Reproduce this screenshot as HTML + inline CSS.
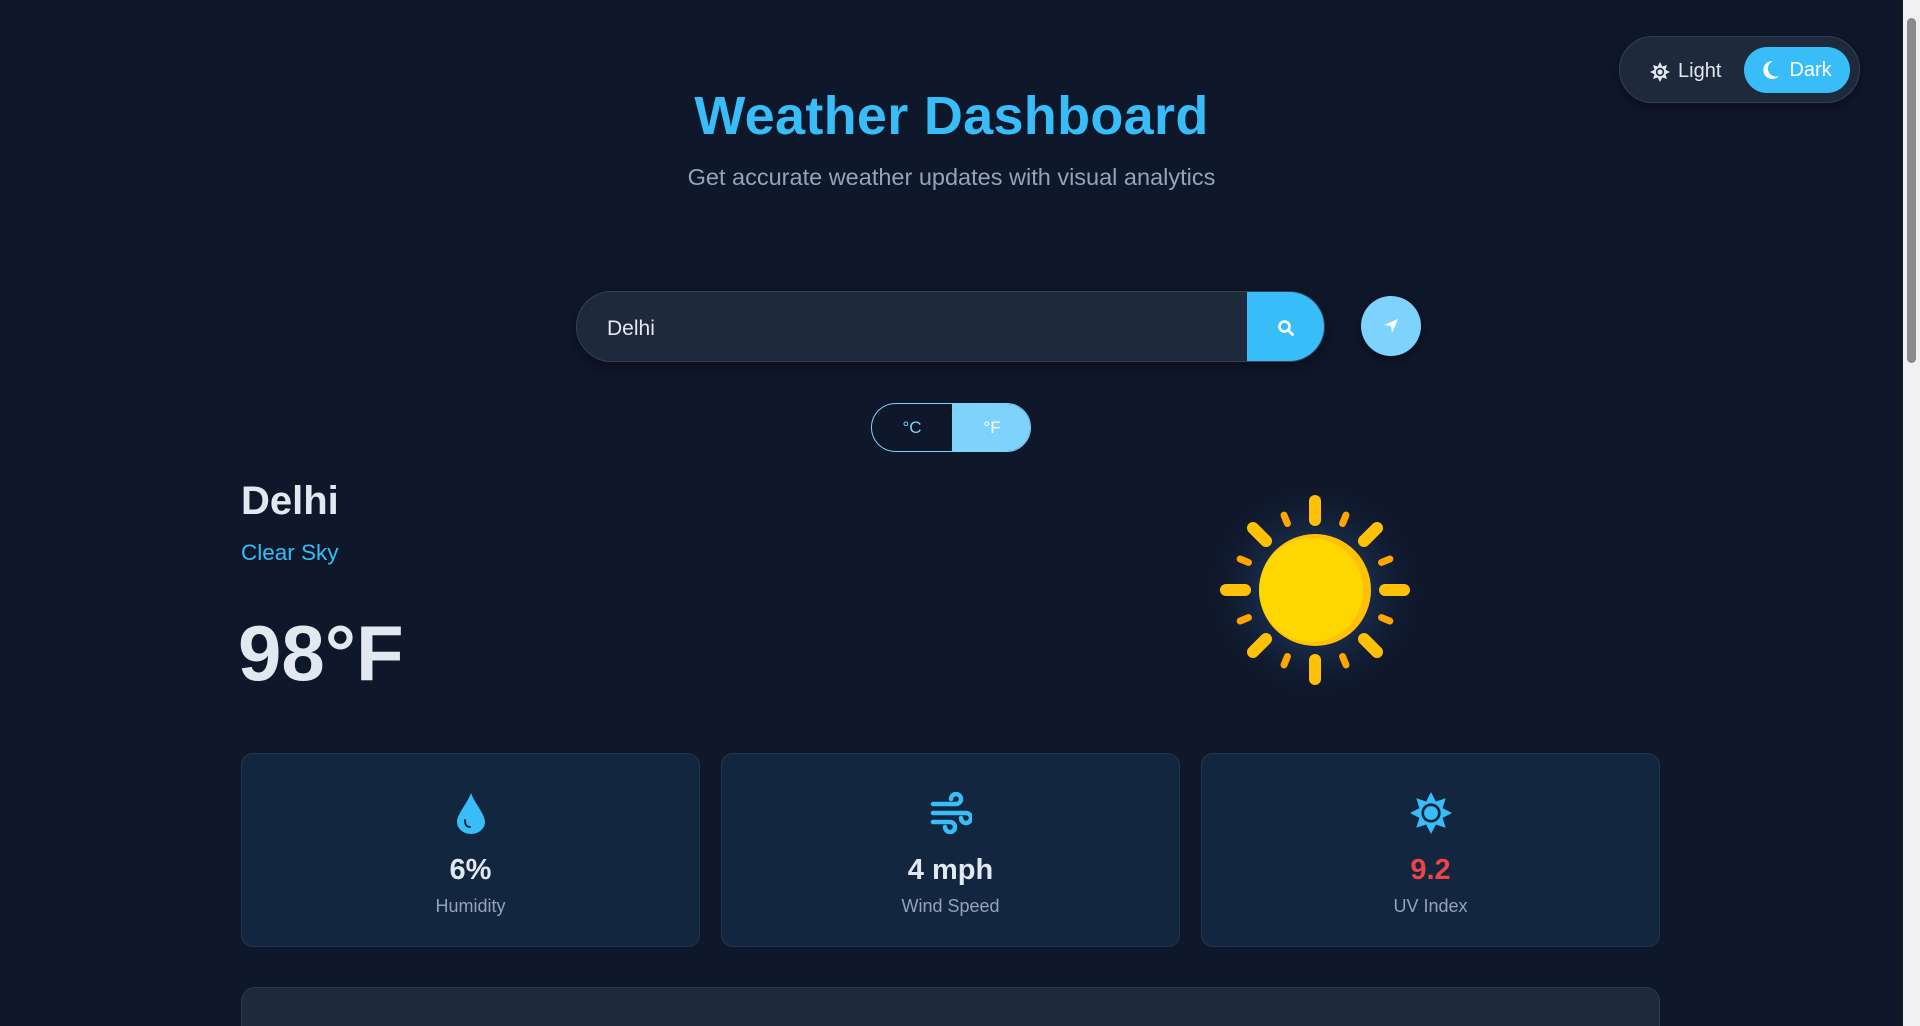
<!DOCTYPE html>
<html style="height:1026px;overflow:hidden"><head><meta charset="utf-8"><style>
*{margin:0;padding:0;box-sizing:border-box}
body{width:1920px;height:1026px;background:#0f172a;font-family:"Liberation Sans",sans-serif;overflow:hidden;position:relative;color:#e2e8f0}
.a{position:absolute}
.sb{position:absolute;right:0;top:0;width:17px;height:1026px;background:#f1f1f1}
.sb .th{position:absolute;left:4px;top:18px;width:9px;height:345px;background:#8a8a8a;border-radius:5px}
h1{position:absolute;left:0;width:1903px;top:85px;text-align:center;font-size:54px;font-weight:bold;color:#38bdf8;letter-spacing:0.3px}
.sub{position:absolute;left:0;width:1903px;top:164px;text-align:center;font-size:23.5px;color:#94a3b8}
.theme{left:1619px;top:36px;width:241px;height:67px;border-radius:34px;background:#1e293b;border:1px solid #334155;box-shadow:0 4px 12px rgba(0,0,0,.4)}
.theme .l{position:absolute;left:30px;top:23px;font-size:20px;color:#e2e8f0;display:flex;align-items:center;gap:8px}
.theme .d{position:absolute;left:124px;top:10px;width:106px;height:46px;border-radius:23px;background:#38bdf8;color:#fff;font-size:20px;display:flex;align-items:center;justify-content:center;gap:9px}
.search{left:576px;top:291px;width:749px;height:71px;border-radius:36px;background:#1e293b;border:1px solid #334155;overflow:hidden;box-shadow:0 6px 16px rgba(0,0,0,.35)}
.search .t{position:absolute;left:30px;top:25px;font-size:21px;color:#e2e8f0}
.search .b{position:absolute;right:0;top:0;width:77px;height:71px;background:#38bdf8;display:flex;align-items:center;justify-content:center}
.loc{left:1361px;top:296px;width:60px;height:60px;border-radius:50%;background:#7dd3fc;display:flex;align-items:center;justify-content:center;box-shadow:0 4px 12px rgba(0,0,0,.4)}
.unit{left:871px;top:403px;width:160px;height:49px;border-radius:25px;border:1px solid #7dd3fc;overflow:hidden}
.unit .c{position:absolute;left:0;top:0;width:80px;height:49px;color:#7dd3fc;font-size:17px;text-align:center;line-height:47px}
.unit .f{position:absolute;left:80px;top:0;width:80px;height:49px;background:#7dd3fc;color:#fff;font-size:17px;text-align:center;line-height:47px}
.card{position:absolute;top:753px;width:459px;height:194px;background:#13263f;border:1px solid #263449;border-radius:12px;text-align:center}
.card .ic{position:absolute;left:0;width:100%;top:38px;height:42px;display:flex;justify-content:center}
.card .v{position:absolute;left:0;width:100%;top:100px;font-size:29px;font-weight:bold;color:#e2e8f0}
.card .n{position:absolute;left:0;width:100%;top:142px;font-size:18px;color:#94a3b8}
.panel{position:absolute;left:241px;top:987px;width:1419px;height:39px;background:#1e293b;border:1px solid #2b3a50;border-bottom:none;border-radius:14px 14px 0 0}
</style></head><body>
<h1>Weather Dashboard</h1>
<div class="sub">Get accurate weather updates with visual analytics</div>

<div class="a theme">
 <div class="l"><svg width="20" height="20" viewBox="0 0 20 20"><polygon fill="#e2e8f0" points="10,0 12.3,4.5 17,3 15.5,7.7 20,10 15.5,12.3 17,17 12.3,15.5 10,20 7.7,15.5 3,17 4.5,12.3 0,10 4.5,7.7 3,3 7.7,4.5"/><circle cx="10" cy="10" r="4.2" fill="#1e293b"/><circle cx="10" cy="10" r="2.6" fill="#e2e8f0"/></svg>Light</div>
 <div class="d"><svg width="18" height="20" viewBox="0 0 18 20"><path d="M11 1 A9 9 0 1 0 17 16 A7.5 7.5 0 0 1 11 1Z" fill="#fff"/></svg>Dark</div>
</div>

<div class="a search"><div class="t">Delhi</div>
 <div class="b"><svg width="18" height="18" viewBox="0 0 18 18"><circle cx="7.5" cy="7.5" r="5" fill="none" stroke="#fff" stroke-width="2.6"/><line x1="11" y1="11" x2="15.5" y2="15.5" stroke="#fff" stroke-width="2.8" stroke-linecap="round"/></svg></div>
</div>
<div class="a loc"><svg width="16" height="16" viewBox="0 0 16 16"><path d="M15 1 L1 7 L8 8 L9 15 Z" fill="#fff"/></svg></div>

<div class="a unit"><div class="c">°C</div><div class="f">°F</div></div>

<div class="a" style="left:241px;top:479px;font-size:40px;font-weight:bold;color:#e2e8f0">Delhi</div>
<div class="a" style="left:241px;top:540px;font-size:22.5px;color:#38bdf8">Clear Sky</div>
<div class="a" style="left:238px;top:608px;font-size:78px;font-weight:bold;color:#e2e8f0">98°F</div>

<svg class="a" style="left:1195px;top:470px" width="240" height="240" viewBox="-120 -120 240 240">
 <defs><radialGradient id="g"><stop offset="0.5" stop-color="#1e3a5f" stop-opacity="0.5"/><stop offset="1" stop-color="#0f172a" stop-opacity="0"/></radialGradient></defs>
 <circle r="115" fill="url(#g)"/>
 <g stroke="#ffc107" stroke-width="12" stroke-linecap="round">
  <line x1="0" y1="-70" x2="0" y2="-89"/><line x1="0" y1="70" x2="0" y2="89"/>
  <line x1="-70" y1="0" x2="-89" y2="0"/><line x1="70" y1="0" x2="89" y2="0"/>
  <line x1="49" y1="-49" x2="62" y2="-62"/><line x1="-49" y1="-49" x2="-62" y2="-62"/>
  <line x1="49" y1="49" x2="62" y2="62"/><line x1="-49" y1="49" x2="-62" y2="62"/>
 </g>
 <g stroke="#ffa500" stroke-width="7" stroke-linecap="round" transform="rotate(22.5)">
  <line x1="0" y1="-72" x2="0" y2="-81"/><line x1="0" y1="72" x2="0" y2="81"/>
  <line x1="-72" y1="0" x2="-81" y2="0"/><line x1="72" y1="0" x2="81" y2="0"/>
 </g>
 <g stroke="#ffa500" stroke-width="7" stroke-linecap="round" transform="rotate(-22.5)">
  <line x1="0" y1="-72" x2="0" y2="-81"/><line x1="0" y1="72" x2="0" y2="81"/>
  <line x1="-72" y1="0" x2="-81" y2="0"/><line x1="72" y1="0" x2="81" y2="0"/>
 </g>
 <circle r="56" fill="#ffc107"/>
 <circle cx="-4" r="52" fill="#ffd700"/>
</svg>

<div class="card" style="left:241px">
 <div class="ic"><svg width="32" height="42" viewBox="0 0 32 42"><path d="M16 1 C20 12 30 22 30 30 A14 12 0 0 1 2 30 C2 22 12 12 16 1Z" fill="#38bdf8"/><path d="M10 28 C10 33 12 35 15 35" fill="none" stroke="#13263f" stroke-width="2" stroke-linecap="round"/></svg></div>
 <div class="v">6%</div><div class="n">Humidity</div>
</div>
<div class="card" style="left:721px">
 <div class="ic"><svg width="42" height="42" viewBox="0 0 42 42"><g fill="none" stroke="#38bdf8" stroke-width="4.5" stroke-linecap="round"><path d="M3 12 H26 A5 5 0 1 0 21 7"/><path d="M3 21 H36 A5 5 0 1 1 31 26"/><path d="M3 30 H20 A5 5 0 1 1 15 35"/></g></svg></div>
 <div class="v">4 mph</div><div class="n">Wind Speed</div>
</div>
<div class="card" style="left:1201px">
 <div class="ic"><svg width="42" height="42" viewBox="0 0 20 20"><polygon fill="#38bdf8" points="10,0 12.3,4.5 17,3 15.5,7.7 20,10 15.5,12.3 17,17 12.3,15.5 10,20 7.7,15.5 3,17 4.5,12.3 0,10 4.5,7.7 3,3 7.7,4.5"/><circle cx="10" cy="10" r="4.6" fill="#13263f"/><circle cx="10" cy="10" r="3.3" fill="#38bdf8"/></svg></div>
 <div class="v" style="color:#ef4444">9.2</div><div class="n">UV Index</div>
</div>

<div class="panel"></div>
<div class="sb"><div class="th"></div></div>
</body></html>
